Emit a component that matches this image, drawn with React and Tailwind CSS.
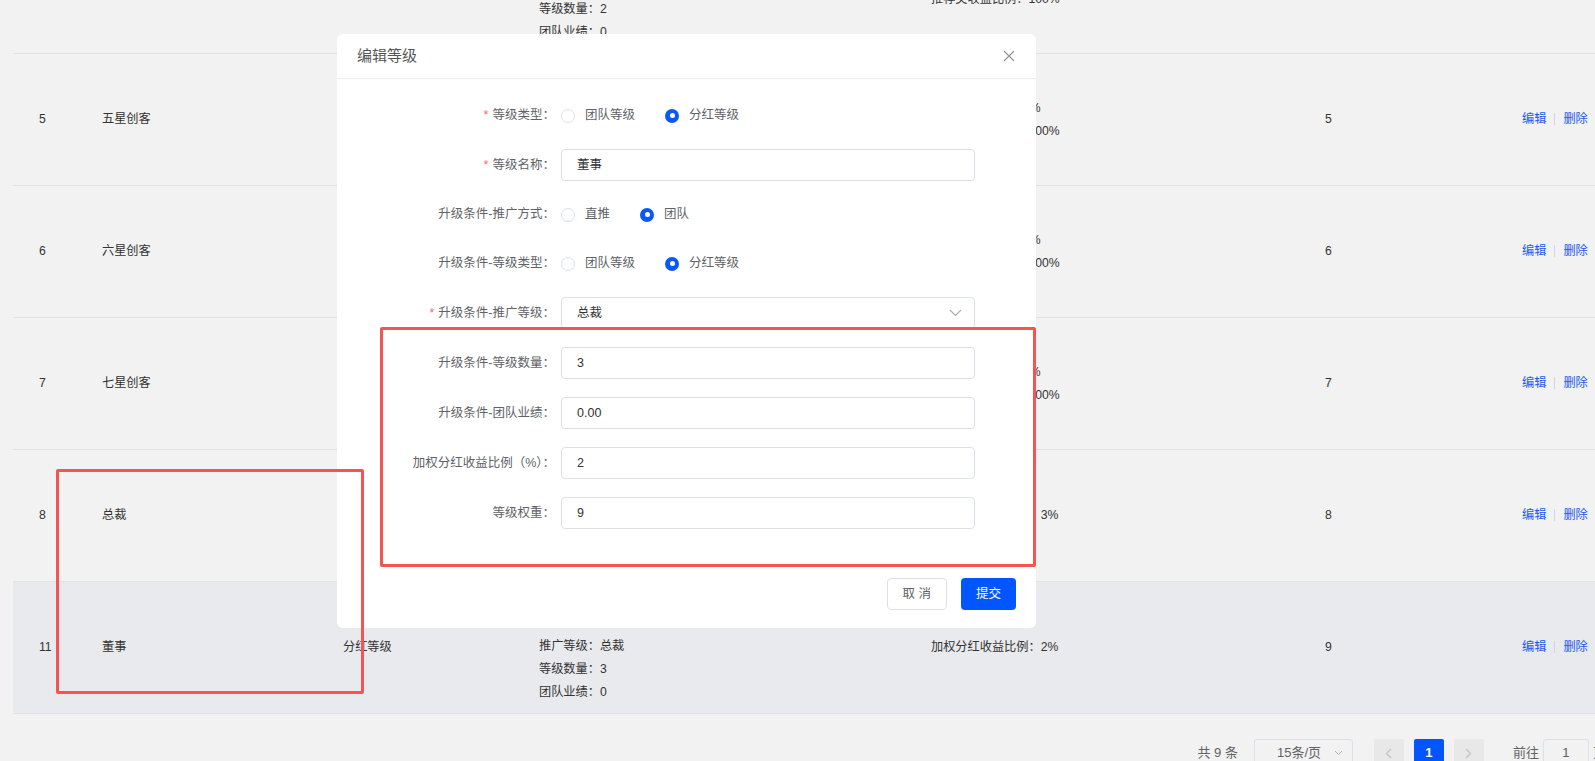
import React from 'react';

const FONT = '"Liberation Sans", "Noto Sans CJK SC", sans-serif';

const teamCond = (level, n) => ['推广方式：直推', '等级类型：团队等级', `推广等级：${level}`, `等级数量：${n}`, '团队业绩：0'];
const teamBenefit = ['团队收益比例：10%', '推荐奖收益比例：100%'];

const rows = [
  { id: 4, name: '四星创客', type: '团队等级', cond: teamCond('三星创客', 2), benefit: teamBenefit, weight: 4 },
  { id: 5, name: '五星创客', type: '团队等级', cond: teamCond('四星创客', 2), benefit: teamBenefit, weight: 5 },
  { id: 6, name: '六星创客', type: '团队等级', cond: teamCond('五星创客', 2), benefit: teamBenefit, weight: 6 },
  { id: 7, name: '七星创客', type: '团队等级', cond: teamCond('六星创客', 2), benefit: teamBenefit, weight: 7 },
  { id: 8, name: '总裁', type: '分红等级', cond: teamCond('七星创客', 2), benefit: ['加权分红收益比例：3%'], weight: 8 },
  {
    id: 11,
    name: '董事',
    type: '分红等级',
    cond: ['推广等级：总裁', '等级数量：3', '团队业绩：0'],
    benefit: ['加权分红收益比例：2%'],
    weight: 9,
    hover: true,
  },
];

function TableRow({ row }) {
  return (
    <div
      className={`grid h-[132px] grid-cols-[63px_241px_196px_392px_394px_197px_120px] items-center border-b border-[#e0e1e5] pl-[26px] text-[12.2px] text-[#333] ${
        row.hover ? 'bg-[#e9eaed]' : ''
      }`}
    >
      <div>{row.id}</div>
      <div>{row.name}</div>
      <div>{row.type}</div>
      <div className="flex flex-col justify-end self-stretch pb-[9px] leading-[23px]">
        {row.cond.map((c) => (
          <div key={c}>{c}</div>
        ))}
      </div>
      <div className="leading-[23px]">
        {row.benefit.map((b) => (
          <div key={b}>{b}</div>
        ))}
      </div>
      <div>{row.weight}</div>
      <div className="flex items-center text-[#2058f0]">
        <span>编辑</span>
        <span className="mx-[8px] h-[12px] w-px bg-[#d4d6dc]" />
        <span>删除</span>
      </div>
    </div>
  );
}

function Radio({ checked, label }) {
  return (
    <span className="mr-[30px] flex items-center">
      {checked ? (
        <span className="flex h-[14px] w-[14px] items-center justify-center rounded-full bg-[#0a59f7]">
          <span className="h-[5px] w-[5px] rounded-full bg-white" />
        </span>
      ) : (
        <span className="h-[14px] w-[14px] rounded-full border border-[#dcdfe6] bg-white" />
      )}
      <span className="ml-[10px] text-[#606266]">{label}</span>
    </span>
  );
}

function FormRow({ label, required, radio, children }) {
  return (
    <div className={`mb-[18px] flex items-center ${radio ? 'h-[31px]' : 'h-[32px]'}`}>
      <div className="w-[204px] flex-none pr-[6px] text-right text-[#606266]">
        {required && <span className="mr-[4px] text-[#f56c6c]">*</span>}
        {label}
      </div>
      {children}
    </div>
  );
}

function Input({ value, select }) {
  return (
    <div className="flex h-[32px] w-[414px] items-center justify-between rounded-[4px] border border-[#dcdfe6] bg-white pl-[15px] pr-[12px] text-[#333]">
      <span>{value}</span>
      {select && (
        <svg width="13" height="8" viewBox="0 0 13 8" fill="none">
          <path d="M1 1l5.5 5.5L12 1" stroke="#a8abb2" strokeWidth="1.1" />
        </svg>
      )}
    </div>
  );
}

function Dialog() {
  return (
    <div className="absolute left-[337px] top-[34px] h-[594px] w-[699px] rounded-[6px] bg-white text-[12.5px]">
      <div className="flex h-[45px] items-center justify-between border-b border-[#ebeef5] pl-[20px] pr-[21px]">
        <span className="text-[15px] text-[#555]">编辑等级</span>
        <svg width="12" height="12" viewBox="0 0 12 12" fill="none">
          <path d="M1 1l10 10M11 1L1 11" stroke="#909399" strokeWidth="1.1" />
        </svg>
      </div>
      <div className="px-[20px] pt-[21px]">
        <FormRow label="等级类型：" required radio>
          <Radio label="团队等级" />
          <Radio label="分红等级" checked />
        </FormRow>
        <FormRow label="等级名称：" required>
          <Input value="董事" />
        </FormRow>
        <FormRow label="升级条件-推广方式：" radio>
          <Radio label="直推" />
          <Radio label="团队" checked />
        </FormRow>
        <FormRow label="升级条件-等级类型：" radio>
          <Radio label="团队等级" />
          <Radio label="分红等级" checked />
        </FormRow>
        <FormRow label="升级条件-推广等级：" required>
          <Input value="总裁" select />
        </FormRow>
        <FormRow label="升级条件-等级数量：">
          <Input value="3" />
        </FormRow>
        <FormRow label="升级条件-团队业绩：">
          <Input value="0.00" />
        </FormRow>
        <FormRow label="加权分红收益比例（%）：">
          <Input value="2" />
        </FormRow>
        <FormRow label="等级权重：">
          <Input value="9" />
        </FormRow>
        <div className="flex justify-end pt-[31px]">
          <button className="h-[32px] rounded-[4px] border border-[#dcdfe6] bg-white px-[15px] text-[12.5px] text-[#606266]">
            取&nbsp;消
          </button>
          <button className="ml-[14px] h-[32px] rounded-[4px] bg-[#0256ff] px-[15px] text-[12.5px] text-white">
            提交
          </button>
        </div>
      </div>
    </div>
  );
}

function Pagination() {
  return (
    <div className="ml-[13px] mt-[25px] flex w-[1593px] items-center justify-end text-[13px] text-[#606266]">
      <span className="mr-[16px]">共 9 条</span>
      <div className="mr-[21px] flex h-[28px] w-[99px] items-center justify-between rounded-[3px] border border-[#dcdfe6] pl-[22px] pr-[9px]">
        <span>15条/页</span>
        <svg width="9" height="6" viewBox="0 0 9 6" fill="none">
          <path d="M1 1l3.5 3.5L8 1" stroke="#a8abb2" strokeWidth="1" />
        </svg>
      </div>
      <div className="mr-[10px] flex h-[28px] w-[30px] items-center justify-center rounded-[2px] bg-[#e8e8e9]">
        <svg width="7" height="11" viewBox="0 0 7 11" fill="none">
          <path d="M6 1L1.5 5.5 6 10" stroke="#c0c4cc" strokeWidth="1.4" />
        </svg>
      </div>
      <div className="mr-[10px] flex h-[28px] w-[30px] items-center justify-center rounded-[2px] bg-[#0256ff] font-bold text-white">
        1
      </div>
      <div className="mr-[29px] flex h-[28px] w-[30px] items-center justify-center rounded-[2px] bg-[#e8e8e9]">
        <svg width="7" height="11" viewBox="0 0 7 11" fill="none">
          <path d="M1 1l4.5 4.5L1 10" stroke="#c0c4cc" strokeWidth="1.4" />
        </svg>
      </div>
      <span className="mr-[4px]">前往</span>
      <div className="mr-[4px] flex h-[28px] w-[46px] items-center justify-center rounded-[3px] border border-[#dcdfe6]">
        1
      </div>
      <span>页</span>
    </div>
  );
}

export default function App() {
  return (
    <div className="relative h-[761px] w-full overflow-hidden bg-[#f2f2f2]" style={{ fontFamily: FONT }}>
      <div className="ml-[13px] mt-[-78px] w-[1640px]">
        {rows.map((r) => (
          <TableRow key={r.id} row={r} />
        ))}
      </div>
      <Pagination />
      <Dialog />
      {/* annotation boxes drawn over the screenshot */}
      <div className="absolute left-[380px] top-[327px] h-[240px] w-[656px] rounded-[2px] border-[3px] border-[#f45454]" />
      <div className="absolute left-[56px] top-[469px] h-[225px] w-[308px] rounded-[2px] border-[3px] border-[#f45454]" />
    </div>
  );
}
